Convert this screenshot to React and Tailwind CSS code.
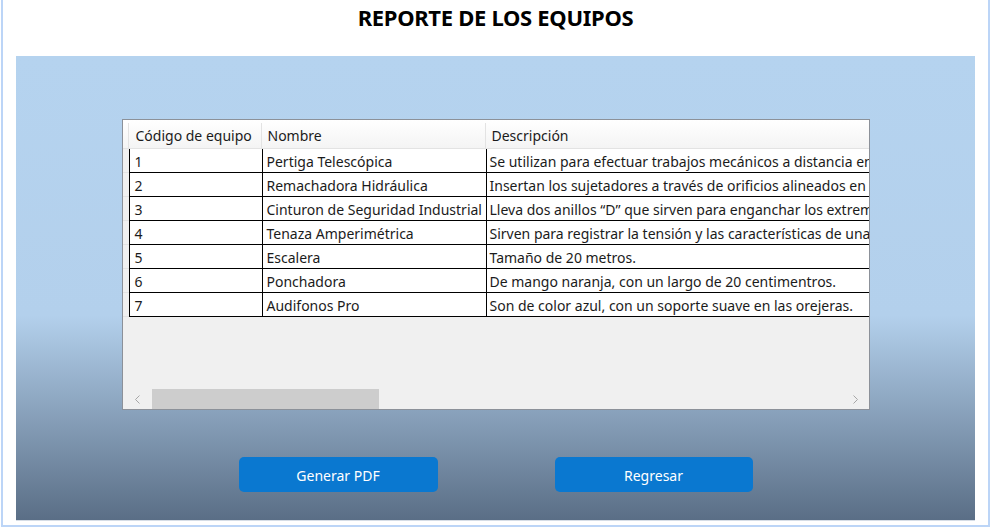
import React from "react";

const equipos = [
  { id: 1, nombre: "Pertiga Telescópica", desc: "Se utilizan para efectuar trabajos mecánicos a distancia en líneas energizadas." },
  { id: 2, nombre: "Remachadora Hidráulica", desc: "Insertan los sujetadores a través de orificios alineados en las piezas." },
  { id: 3, nombre: "Cinturon de Seguridad Industrial", desc: "Lleva dos anillos “D” que sirven para enganchar los extremos de la correa." },
  { id: 4, nombre: "Tenaza Amperimétrica", desc: "Sirven para registrar la tensión y las características de una corriente." },
  { id: 5, nombre: "Escalera", desc: "Tamaño de 20 metros." },
  { id: 6, nombre: "Ponchadora", desc: "De mango naranja, con un largo de 20 centimentros." },
  { id: 7, nombre: "Audifonos Pro", desc: "Son de color azul, con un soporte suave en las orejeras." },
];

export default function App() {
  return (
    <div className="w-[992px] h-[532px] bg-white font-['Noto_Sans',sans-serif]">
      {/* Marco de la ventana */}
      <div className="ml-[1px] w-[989px] h-[527px] border-x-2 border-b-2 border-[#bcd5f7] flex flex-col px-[13px]">
        {/* Titulo */}
        <div className="h-[56px] flex justify-center pt-[1px]">
          <h1 className="text-[22px] font-bold text-black tracking-[-0.3px]">REPORTE DE LOS EQUIPOS</h1>
        </div>

        {/* Panel */}
        <div className="h-[465px] flex flex-col items-center bg-[linear-gradient(to_bottom,#b5d3ef_0%,#b3d0ec_56%,#5a6e86_100%)] border-b border-[#d6dde6]">
          {/* Tabla */}
          <div className="mt-[63px] w-[748px] h-[291px] border border-[#8c9199] bg-[#f0f0f0] flex flex-col overflow-hidden text-[14px] text-[#1b1b1b]">
            <div className="flex-1 overflow-hidden">
              <div className="w-[1100px]">
                {/* Encabezado */}
                <div className="flex h-[29px] pt-[3px] bg-[linear-gradient(to_bottom,#ffffff,#f4f4f4)] border-b border-[#e3e3e3]">
                  <div className="w-[6px] border-r border-[#e3e3e3]"></div>
                  <div className="w-[133px] pl-[7px] flex items-center border-r border-[#e3e3e3]">Código de equipo</div>
                  <div className="w-[224px] pl-[6px] flex items-center border-r border-[#e3e3e3]">Nombre</div>
                  <div className="flex-1 pl-[6px] flex items-center">Descripción</div>
                </div>
                {/* Filas */}
                {equipos.map((e) => (
                  <div key={e.id} className="flex h-[24px]">
                    <div className="w-[6px] bg-[#f0f0f0] border-b border-[#e3e3e3]"></div>
                    <div className="w-[133px] pl-[5px] pt-[2px] flex items-center bg-white border-l border-b border-black whitespace-nowrap">{e.id}</div>
                    <div className="w-[224px] pl-[4px] pt-[2px] flex items-center bg-white border-l border-b border-black whitespace-nowrap">{e.nombre}</div>
                    <div className="flex-1 pl-[3px] pt-[2px] flex items-center bg-white border-l border-b border-black whitespace-nowrap">{e.desc}</div>
                  </div>
                ))}
              </div>
            </div>
            {/* Barra de desplazamiento */}
            <div className="h-[20px] flex items-center shrink-0 bg-[#f0f0f0]">
              <div className="w-[29px] flex justify-center text-[#a6a6a6]">
                <svg width="7" height="9" viewBox="0 0 7 9" fill="none" stroke="currentColor" strokeWidth="1">
                  <path d="M5.5 0.5 L1.5 4.5 L5.5 8.5" />
                </svg>
              </div>
              <div className="w-[227px] h-[20px] bg-[#cdcdcd]"></div>
              <div className="flex-1"></div>
              <div className="w-[26px] flex justify-center text-[#a6a6a6]">
                <svg width="7" height="9" viewBox="0 0 7 9" fill="none" stroke="currentColor" strokeWidth="1">
                  <path d="M1.5 0.5 L5.5 4.5 L1.5 8.5" />
                </svg>
              </div>
            </div>
          </div>

          {/* Botones */}
          <div className="mt-[47px] flex gap-[117px]">
            <button className="w-[199px] h-[35px] rounded-[5px] bg-[#0a78d0] text-white text-[14px] pt-[2px]">Generar PDF</button>
            <button className="w-[198px] h-[35px] rounded-[5px] bg-[#0a78d0] text-white text-[14px] pt-[2px]">Regresar</button>
          </div>
        </div>
      </div>
    </div>
  );
}
